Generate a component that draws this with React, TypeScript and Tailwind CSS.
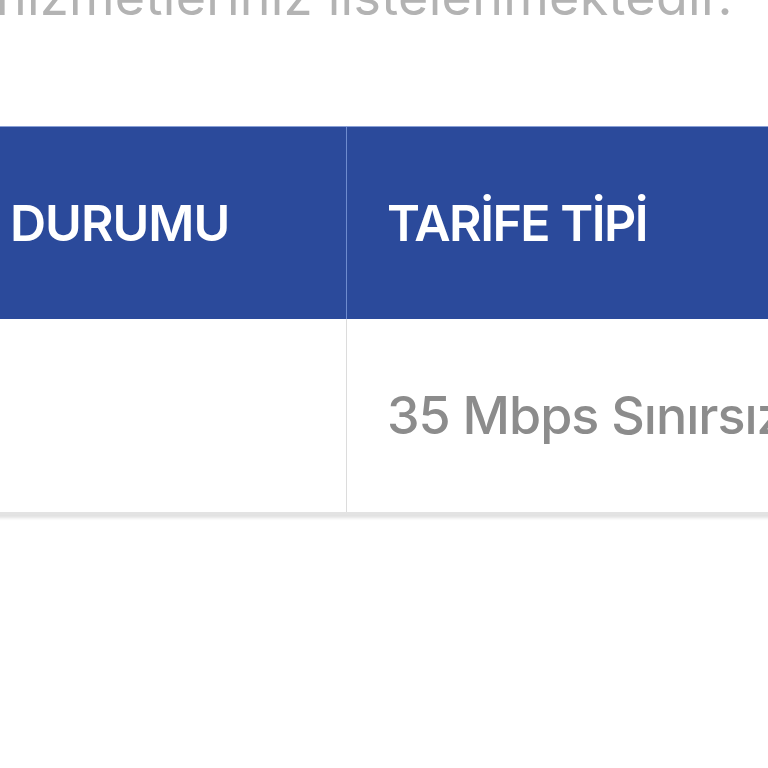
export default function App() {
  return (
    <div className="w-[768px] h-[768px] bg-white overflow-hidden relative" style={{ fontFamily: "Inter, 'Open Sans', sans-serif" }}>
      <p className="mt-[-30px] h-[54px] leading-[54px] text-[52px] text-[#b3b3b3] whitespace-nowrap ml-[-4px] tracking-[0.3px]">
        hizmetleriniz listelenmektedir.
      </p>
      <div className="mt-[102px] ml-[-30px] w-[900px] border-t border-[#8aa0d6] shadow-[0_3px_3px_rgba(0,0,0,0.12)]">
        <div className="flex h-[192px] bg-[#2b4a9b]">
          <div className="w-[377px] border-r border-[#6f8ccf] flex items-center pl-[40px] text-[50px] font-semibold text-white tracking-[-1px]">
            DURUMU
          </div>
          <div className="flex-1 flex items-center pl-[40px] text-[50px] font-semibold text-white tracking-[-1.5px]">
            TARİFE TİPİ
          </div>
        </div>
        <div className="flex h-[196px] bg-white border-b-[3px] border-[#e3e3e3]">
          <div className="w-[377px] border-r border-[#dcdcdc]"></div>
          <div className="flex-1 flex items-center pl-[40px] text-[52px] font-medium text-[#8c8c8c] whitespace-nowrap tracking-[-1px]">
            35 Mbps Sınırsız
          </div>
        </div>
      </div>
    </div>
  );
}
